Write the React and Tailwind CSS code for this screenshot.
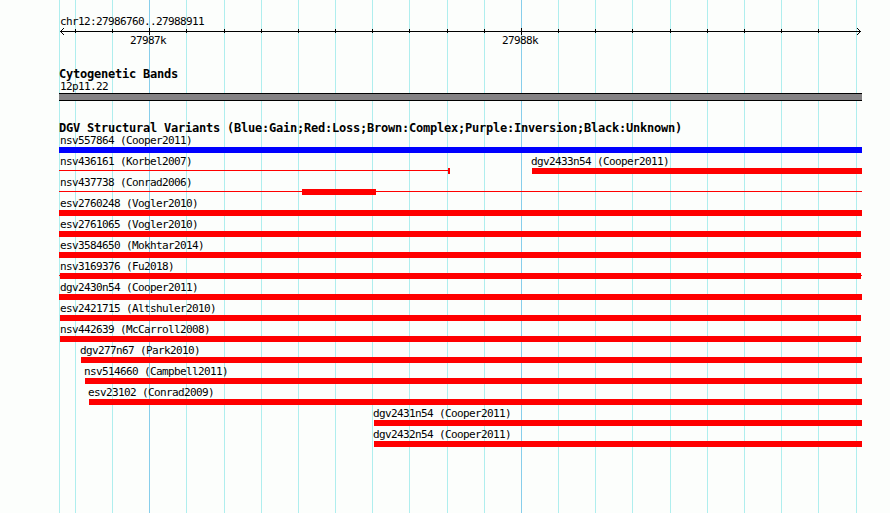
import React from "react";

const minorTicks = [
  75, 112, 186, 224, 261, 298, 335, 372, 409, 447, 484, 558, 595, 632, 670,
  707, 744, 781, 818,
];
const majorTicks = [149, 521];
const gridLines = [59, ...minorTicks, 856];

// start / end are pixels from the left edge of the track area
const variants = [
  [{ name: "nsv557864 (Cooper2011)", start: 0, end: 803, color: "bg-[#0000ff]" }],
  [
    { name: "nsv436161 (Korbel2007)", start: 0, end: 391, thick: [389, 391] },
    { name: "dgv2433n54 (Cooper2011)", start: 473, end: 803 },
  ],
  [{ name: "nsv437738 (Conrad2006)", start: 0, end: 803, thick: [243, 317] }],
  [{ name: "esv2760248 (Vogler2010)", start: 0, end: 803 }],
  [{ name: "esv2761065 (Vogler2010)", start: 0, end: 802 }],
  [{ name: "esv3584650 (Mokhtar2014)", start: 0, end: 802 }],
  [{ name: "nsv3169376 (Fu2018)", start: 0, end: 803, thick: [1, 802] }],
  [{ name: "dgv2430n54 (Cooper2011)", start: 0, end: 803 }],
  [{ name: "esv2421715 (Altshuler2010)", start: 1, end: 802 }],
  [{ name: "nsv442639 (McCarroll2008)", start: 1, end: 802 }],
  [{ name: "dgv277n67 (Park2010)", start: 22, end: 803 }],
  [{ name: "nsv514660 (Campbell2011)", start: 26, end: 803 }],
  [{ name: "esv23102 (Conrad2009)", start: 30, end: 803 }],
  [{ name: "dgv2431n54 (Cooper2011)", start: 315, end: 803 }],
  [{ name: "dgv2432n54 (Cooper2011)", start: 315, end: 803 }],
];

function Grid() {
  return (
    <svg className="absolute inset-0" width="890" height="513" shapeRendering="crispEdges">
      {gridLines.map((x) => (
        <rect key={x} x={x} y="0" width="1" height="513" fill="#afeeee" />
      ))}
      {majorTicks.map((x) => (
        <rect key={x} x={x} y="0" width="1" height="513" fill="#87ceeb" />
      ))}
    </svg>
  );
}

function Axis() {
  return (
    <svg className="block" width="803" height="9" viewBox="59 27 803 9" shapeRendering="crispEdges">
      <rect x="60" y="31" width="801" height="1" />
      {minorTicks.map((x) => (
        <rect key={x} x={x} y="29" width="1" height="4" />
      ))}
      {majorTicks.map((x) => (
        <rect key={x} x={x} y="28" width="1" height="7" />
      ))}
      {[0, 1, 2, 3].map((i) => (
        <React.Fragment key={i}>
          <rect x={60 + i} y={31 - i} width="1" height="1" />
          <rect x={60 + i} y={31 + i} width="1" height="1" />
          <rect x={860 - i} y={31 - i} width="1" height="1" />
          <rect x={860 - i} y={31 + i} width="1" height="1" />
        </React.Fragment>
      ))}
    </svg>
  );
}

function Heading({ children }) {
  return (
    <h2 className="h-3 text-[12px] leading-[13px] font-bold tracking-[-0.225px]">
      {children}
    </h2>
  );
}

function Variant({ item, offset }) {
  const { name, start, end, thick, color = "bg-[#ff0000]" } = item;
  return (
    <div className="shrink-0" style={{ width: end - start, marginLeft: start - offset }}>
      <div className="h-[13px]" style={{ marginLeft: start > 1 ? -1 : 1 - start }}>
        {name}
      </div>
      {thick ? (
        <div className="relative flex h-1.5">
          <div className={`absolute top-0.5 h-px w-full ${color}`} />
          <div
            className={`relative h-1.5 ${color}`}
            style={{ marginLeft: thick[0] - start, width: thick[1] - thick[0] }}
          />
        </div>
      ) : (
        <div className={`h-1.5 ${color}`} />
      )}
    </div>
  );
}

export default function App() {
  return (
    <div className="relative h-[513px] w-[890px] overflow-hidden bg-[#fcfefc] font-['DejaVu_Sans_Mono',monospace] text-[11px] leading-[13px] tracking-[-0.623px] whitespace-pre text-black">
      <Grid />
      <main className="relative ml-[59px] w-[803px] pt-[15px]">
        <div className="h-3 pl-px">chr12:27986760..27988911</div>
        <Axis />
        <div className="-mt-0.5 flex h-[34px]">
          <span className="ml-[71px] w-[372px]">27987k</span>
          <span>27988k</span>
        </div>

        <Heading>Cytogenetic Bands</Heading>
        <div className="h-[13px] pl-px">12p11.22</div>
        <div className="h-2 border-y border-black bg-[#848284]" />

        <div className="mt-[21px]">
          <Heading>
            DGV Structural Variants (Blue:Gain;Red:Loss;Brown:Complex;Purple:Inversion;Black:Unknown)
          </Heading>
        </div>
        {variants.map((row, i) => (
          <div key={i} className="flex h-[21px]">
            {row.map((item, j) => (
              <Variant key={item.name} item={item} offset={j > 0 ? row[j - 1].end : 0} />
            ))}
          </div>
        ))}
      </main>
    </div>
  );
}
